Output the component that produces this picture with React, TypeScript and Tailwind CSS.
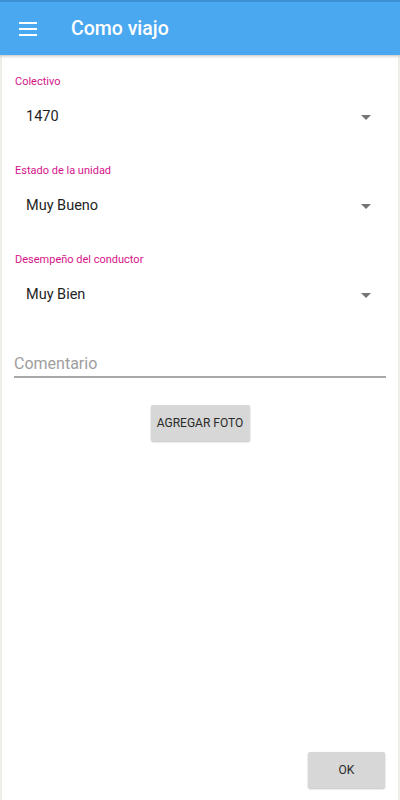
import React from "react";

function Field({ label, value }: { label: string; value: string }) {
  return (
    <div className="flex flex-col">
      <div className="h-[28px] flex items-end pl-[13px] text-[11px] leading-[14px] text-[#d4148a]">{label}</div>
      <div className="h-[61px] flex items-start pt-[16px] pl-[24px] pr-[27px]">
        <div className="flex-1 h-[24px] flex items-center text-[14.5px] text-[#1f1f1f]">{value}</div>
        <div className="h-[24px] flex items-center">
          <svg width="10" height="5" viewBox="0 0 10 5">
            <path d="M0 0 L10 0 L5 5 Z" fill="#757575" />
          </svg>
        </div>
      </div>
    </div>
  );
}

export default function App() {
  return (
    <div className="w-[400px] h-[800px] bg-white flex flex-col relative overflow-hidden" style={{ fontFamily: "Roboto, 'Noto Sans', sans-serif" }}>
      <div className="h-[55px] bg-[#4aa8f0] border-t-2 border-[#3b8fd2] flex items-center shadow-[0_1px_3px_rgba(0,0,0,0.25)] z-10 shrink-0">
        <div className="w-[71px] flex pl-[19px]">
          <svg width="18" height="14" viewBox="0 0 18 14">
            <rect x="0" y="0" width="18" height="2" fill="white" />
            <rect x="0" y="6" width="18" height="2" fill="white" />
            <rect x="0" y="12" width="18" height="2" fill="white" />
          </svg>
        </div>
        <div className="text-white text-[19.5px] font-medium">Como viajo</div>
      </div>
      <div className="flex-1 flex flex-col border-l-2 border-r-2 border-[#efede8] pt-[6px]">
        <Field label="Colectivo" value="1470" />
        <Field label="Estado de la unidad" value="Muy Bueno" />
        <Field label="Desempeño del conductor" value="Muy Bien" />
        <div className="px-[12px] pt-[25px]">
          <div className="h-[23px] flex items-end text-[16px] text-[#9e9e9e]">Comentario</div>
          <div className="h-[2px] bg-[#a8a8a8]" />
        </div>
        <div className="flex justify-center pt-[27px]">
          <button className="w-[99px] h-[36px] bg-[#d6d7d6] rounded-[2px] text-[12px] font-normal text-[#2a2a2a] shadow-[0_1px_2px_rgba(0,0,0,0.25)]">
            AGREGAR FOTO
          </button>
        </div>
        <div className="flex-1" />
        <div className="flex justify-end pr-[13px] pb-[12px]">
          <button className="w-[77px] h-[36px] bg-[#d6d7d6] rounded-[2px] text-[12px] font-normal text-[#2a2a2a] shadow-[0_1px_2px_rgba(0,0,0,0.25)]">
            OK
          </button>
        </div>
      </div>
    </div>
  );
}
